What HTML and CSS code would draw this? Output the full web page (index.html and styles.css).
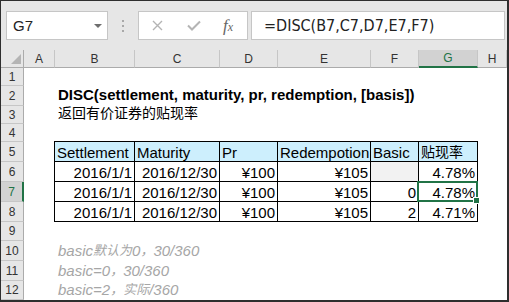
FILE: index.html
```html
<!DOCTYPE html>
<html lang="zh-CN">
<head>
  <meta charset="UTF-8">
  <meta name="viewport" content="width=device-width, initial-scale=1.0">
  <title>DISC</title>
  <link rel="stylesheet" href="styles.css">
</head>
<body>
  <div class="window">
    <div class="toolbar">
      <div class="namebox"><span>G7</span><i class="caret"></i></div>
      <div class="grip"><i></i><i></i><i></i></div>
      <div class="fxbox">
        <svg class="cancel" width="11" height="11" viewBox="0 0 11 11"><path d="M1 1L10 10M10 1L1 10" stroke="#b4b4b4" stroke-width="1.4" fill="none"/></svg>
        <svg class="check" width="14" height="11" viewBox="0 0 14 11"><path d="M1 5.5L5 9.5L13 1.5" stroke="#b4b4b4" stroke-width="2" fill="none"/></svg>
        <span class="fx">f<small>x</small></span>
      </div>
      <div class="formula">=DISC(B7,C7,D7,E7,F7)</div>
    </div>

    <div class="sheet">
      <div class="corner"><i></i></div>
      <div class="ch">A</div>
      <div class="ch">B</div>
      <div class="ch">C</div>
      <div class="ch">D</div>
      <div class="ch">E</div>
      <div class="ch">F</div>
      <div class="ch on">G</div>
      <div class="ch">H</div>

      <div class="rh">1</div>
      <div class="rh">2</div>
      <div class="rh">3</div>
      <div class="rh">4</div>
      <div class="rh">5</div>
      <div class="rh">6</div>
      <div class="rh on">7</div>
      <div class="rh">8</div>
      <div class="rh">9</div>
      <div class="rh">10</div>
      <div class="rh">11</div>
      <div class="rh">12</div>

      <div class="cell title">DISC(settlement, maturity, pr, redemption, [basis])</div>
      <div class="cell sub"><span class="cn">返回有价证券的贴现率</span></div>

      <div class="tbl">
        <div class="hd">Settlement</div>
        <div class="hd">Maturity</div>
        <div class="hd">Pr</div>
        <div class="hd">Redempotion</div>
        <div class="hd">Basic</div>
        <div class="hd"><span class="cn">贴现率</span></div>

        <div>2016/1/1</div>
        <div>2016/12/30</div>
        <div>¥100</div>
        <div>¥105</div>
        <div class="blank"></div>
        <div>4.78%</div>

        <div>2016/1/1</div>
        <div>2016/12/30</div>
        <div>¥100</div>
        <div>¥105</div>
        <div>0</div>
        <div class="sel">4.78%</div>

        <div>2016/1/1</div>
        <div>2016/12/30</div>
        <div>¥100</div>
        <div>¥105</div>
        <div>2</div>
        <div>4.71%</div>
      </div>

      <div class="cell note n10">basic<span class="cn">默认为</span>0<span class="cn">，</span>30/360</div>
      <div class="cell note n11">basic=0<span class="cn">，</span>30/360</div>
      <div class="cell note n12">basic=2<span class="cn">，实际</span>/360</div>
    </div>
  </div>
</body>
</html>
```

FILE: styles.css
```css
*{margin:0;padding:0;box-sizing:border-box;}
body{font-family:'Liberation Sans','Noto Sans CJK SC',sans-serif;color:#000;background:#fff;}

.window{width:509px;height:302px;border:solid #2e2e2e;border-width:1px 2px 2px 1px;display:flex;flex-direction:column;overflow:hidden;background:#fff;}

/* formula bar */
.toolbar{height:49px;flex:none;background:#e6e6e6;display:flex;align-items:flex-start;padding:10px 2px 0 5px;}
.namebox{width:102px;height:29px;background:#fff;border:1px solid #c6c6c6;display:flex;align-items:center;justify-content:space-between;padding:0 5px 0 6px;font-size:15px;color:#222;}
.caret{border-left:4px solid transparent;border-right:4px solid transparent;border-top:4px solid #6e6e6e;}
.grip{display:flex;flex-direction:column;gap:3px;margin:9px 14px 0;}
.grip i{width:2px;height:2px;background:#a8a8a8;}
.fxbox{width:110px;height:29px;background:#fff;border:1px solid #c6c6c6;display:flex;align-items:center;padding-left:13px;}
.fxbox .check{margin-left:24px;}
.fx{margin-left:22px;font-family:'Liberation Serif',serif;font-style:italic;font-size:17px;color:#666;}
.fx small{font-size:12px;}
.formula{flex:1;height:29px;margin-left:3px;background:#fff;border:1px solid #c6c6c6;padding-left:12px;display:flex;align-items:center;font-family:'DejaVu Sans Condensed','Liberation Sans',sans-serif;font-size:16px;color:#222;white-space:nowrap;}

/* sheet */
.sheet{flex:1;display:grid;grid-template-columns:23px 31px 80px 85px 58px 93px 48px 59px 1fr;grid-template-rows:18px 18px 20px 18px 18px repeat(4,20px) 19px 20px 20px 19px;font-size:15px;}
.corner{background:#e6e6e6;border-right:1px solid #ababab;border-bottom:1px solid #ababab;display:flex;align-items:flex-end;justify-content:flex-end;padding:0 2px 3px 0;}
.corner i{border-left:10px solid transparent;border-bottom:10px solid #b4b4b4;}
.ch{background:#e6e6e6;border-right:1px solid #c6c6c6;border-bottom:1px solid #ababab;display:flex;align-items:center;justify-content:center;font-size:12px;color:#333;}
.ch.on{background:#d2d2d2;border-bottom:2px solid #217346;color:#217346;}
.rh{grid-column:1;background:#e6e6e6;border-right:1px solid #ababab;border-bottom:1px solid #c6c6c6;display:flex;align-items:center;justify-content:center;font-size:12px;color:#333;}
.rh.on{background:#d2d2d2;border-right:2px solid #217346;color:#217346;}

.cell{grid-column:3 / -1;display:flex;align-items:flex-end;padding:0 3px 2px;line-height:17px;white-space:nowrap;}
.cn{font-size:14px;}
.title{grid-row:3;font-weight:bold;align-items:flex-start;}
.sub{grid-row:4;}
.note{color:#a6a6a6;font-style:italic;}
.note .cn{font-size:13px;}
.n10{grid-row:11;}
.n11{grid-row:12;}
.n12{grid-row:13;}

/* data table B5:G8 */
.tbl{grid-row:6 / span 4;grid-column:3 / span 6;display:grid;grid-template-columns:80px 85px 58px 93px 48px 59px;grid-auto-rows:20px;border-left:1px solid #000;border-top:1px solid #000;margin:-1px 0 0 -1px;align-self:start;justify-self:start;}
.tbl div{border-right:1px solid #000;border-bottom:1px solid #000;display:flex;align-items:flex-end;justify-content:flex-end;padding:0 2px;line-height:17px;white-space:nowrap;overflow:hidden;}
.tbl .hd{background:#cdeffd;justify-content:flex-start;}
.tbl .blank{background:#f2f2f2;}
.tbl .sel{position:relative;overflow:visible;}
.tbl .sel::after{content:'';position:absolute;left:-2px;top:-1px;right:-1px;bottom:-1px;border:2px solid #217346;}
.tbl .sel::before{content:'';position:absolute;right:-2px;bottom:-2px;width:5px;height:5px;background:#217346;box-shadow:0 0 0 1px #fff;z-index:1;}
```
